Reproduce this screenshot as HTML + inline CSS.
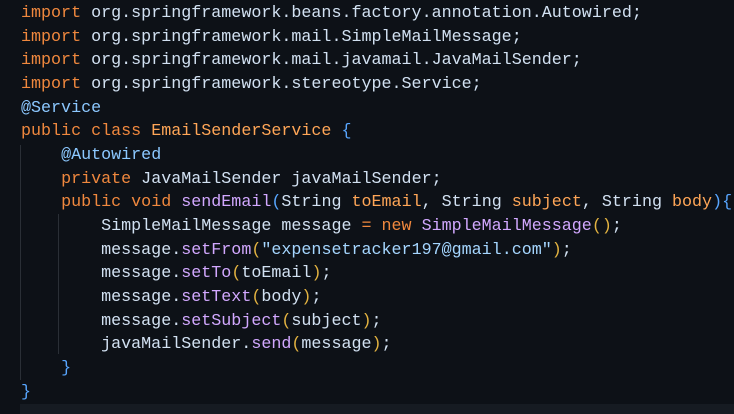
<!DOCTYPE html>
<html><head><meta charset="utf-8"><style>
html,body{margin:0;padding:0;background:#0d1117;width:734px;height:414px;overflow:hidden}
pre{margin:0;position:absolute;left:21px;top:2px;font-family:"Liberation Mono","DejaVu Sans Mono",monospace;font-size:16.7px;line-height:23.65px;color:#d2e1f2}
.k{color:#f0883e}.p{color:#ffa657}.m{color:#d2a8ff}.s{color:#a5d6ff}.b{color:#58a6ff}.y{color:#e3b341}.a{color:#8cc8ff}
.g1{position:absolute;left:20px;top:145px;width:1px;height:235px;background:#2a2f36}
.g2{position:absolute;left:58px;top:214px;width:1px;height:140px;background:#2a2f36}
.bar{position:absolute;left:20px;top:404px;width:714px;height:10px;background:#161b22}
</style></head><body>
<div class="g1"></div><div class="g2"></div><div class="bar"></div>
<pre><span class="k">import</span> org.springframework.beans.factory.annotation.Autowired;
<span class="k">import</span> org.springframework.mail.SimpleMailMessage;
<span class="k">import</span> org.springframework.mail.javamail.JavaMailSender;
<span class="k">import</span> org.springframework.stereotype.Service;
<span class="a">@Service</span>
<span class="k">public class</span> <span class="p">EmailSenderService</span> <span class="b">{</span>
    <span class="a">@Autowired</span>
    <span class="k">private</span> JavaMailSender javaMailSender;
    <span class="k">public void</span> <span class="m">sendEmail</span><span class="b">(</span>String <span class="p">toEmail</span>, String <span class="p">subject</span>, String <span class="p">body</span><span class="b">){</span>
        SimpleMailMessage message <span class="k">=</span> <span class="k">new</span> <span class="m">SimpleMailMessage</span><span class="y">()</span>;
        message.<span class="m">setFrom</span><span class="y">(</span><span class="s">"expensetracker197@gmail.com"</span><span class="y">)</span>;
        message.<span class="m">setTo</span><span class="y">(</span>toEmail<span class="y">)</span>;
        message.<span class="m">setText</span><span class="y">(</span>body<span class="y">)</span>;
        message.<span class="m">setSubject</span><span class="y">(</span>subject<span class="y">)</span>;
        javaMailSender.<span class="m">send</span><span class="y">(</span>message<span class="y">)</span>;
    <span class="b">}</span>
<span class="b">}</span></pre>
</body></html>
